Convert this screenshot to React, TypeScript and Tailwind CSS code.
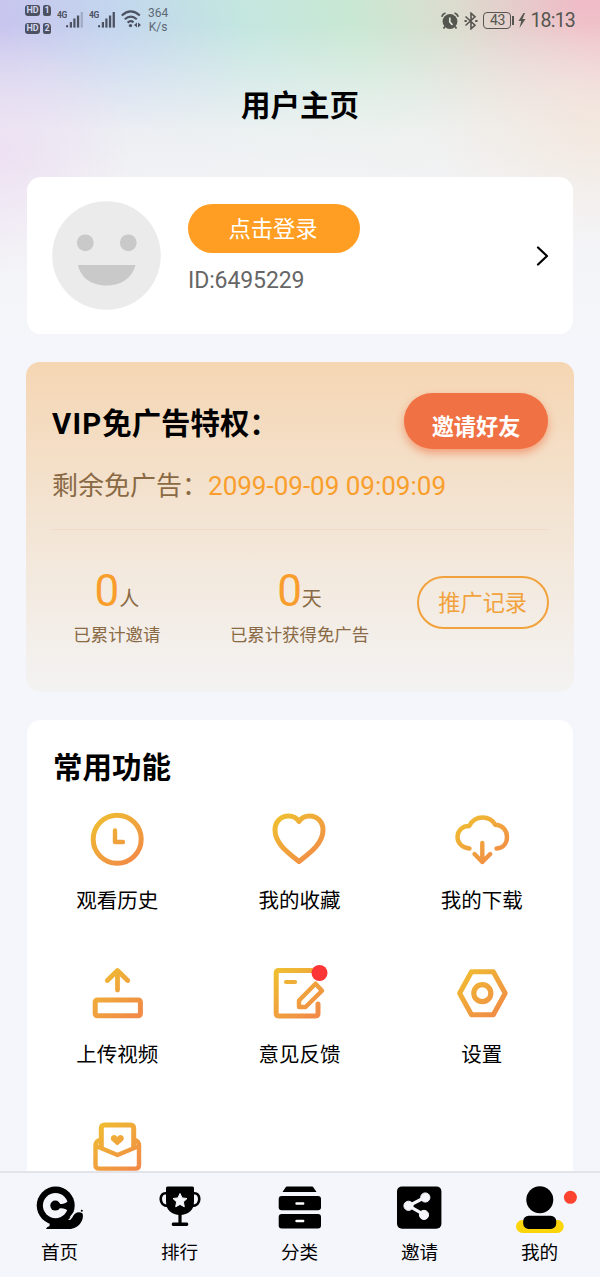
import { Fragment } from "react";
import type { ReactNode } from "react";

const HEART = "M27 9.5C24.5 5.5 20.5 4 16.5 4C8.5 4 3 10 3 18C3 31 15 40 27 49.5C39 40 51 31 51 18C51 10 45.5 4 37.5 4C33.5 4 29.5 5.5 27 9.5Z"

const features: { id: string; label?: string; icon: ReactNode; dot?: boolean }[] = [
  {
    id: "history",
    label: "观看历史",
    icon: (
      <>
        <circle cx="27.2" cy="27.2" r="24" strokeWidth="5" />
        <path d="M25 18.5V30H33" strokeWidth="4.4" />
      </>
    ),
  },
  { id: "favorite", label: "我的收藏", icon: <path d={HEART} /> },
  {
    id: "download",
    label: "我的下载",
    icon: (
      <>
        <path d="M14.5 36.5C7 36 2.5 31 2.5 25C2.5 18 8 13.8 14.2 14C17 8.5 21.5 5.5 27.5 5.5C33.5 5.5 38 8.5 40.2 12.8C47.5 13 52 18.5 52 25C52 31.5 48 36 41.5 36.5" strokeWidth="4.4" />
        <path d="M27.3 31V50M19.5 42L27.3 50L35.2 42" strokeWidth="4.4" />
      </>
    ),
  },
  {
    id: "upload",
    label: "上传视频",
    icon: (
      <>
        <rect x="5.2" y="34" width="45.2" height="15.8" rx="2" strokeWidth="5" />
        <path d="M27.5 24V5M17.3 14.5L27.5 4.5L37.7 14.5" strokeWidth="4.8" />
      </>
    ),
  },
  {
    id: "feedback",
    label: "意见反馈",
    dot: true,
    icon: (
      <>
        <path d="M40 4.5H7Q4.2 4.5 4.2 7.3V47.2Q4.2 50 7 50H43.2Q46 50 46 47.2V38" />
        <path d="M14 16H23" strokeWidth="4.2" />
        <path d="M27 34.5L43.5 17.7L50 24.7L33.5 41H27Z" strokeWidth="4.4" />
      </>
    ),
  },
  {
    id: "settings",
    label: "设置",
    icon: (
      <>
        <path d="M16.5 5.7H38.3L50.2 27.2L38.3 48.7H16.5L4.6 27.2Z" strokeWidth="5" />
        <circle cx="27.3" cy="27.2" r="8.5" strokeWidth="5.2" />
      </>
    ),
  },
  {
    id: "mail",
    icon: (
      <>
        <path d="M11.3 27V8.5Q11.3 5 14.8 5H40.2Q43.7 5 43.7 8.5V27" />
        <path d="M11 20Q5.5 20.5 5.5 26V45Q5.5 48.6 9 48.6H45.6Q49 48.6 49 45V26Q49 20.5 44 20" strokeWidth="4.4" />
        <path d="M6 26L27.5 35L49 26" strokeWidth="4.4" />
        <path d="M27.3 25.5L21.5 20.5Q19.8 17.5 22.3 15.5Q25.3 13.8 27.3 17Q29.3 13.8 32.3 15.5Q34.8 17.5 33.1 20.5Z" fill="url(#warm)" stroke="none" />
      </>
    ),
  },
]

const tabs: { id: string; label: string; icon: ReactNode }[] = [
  {
    id: "home",
    label: "首页",
    icon: (
      <>
        <path d="M10 43Q10.5 41 13.5 40L14 34H34C37 32 37 28 41 26.5Q44 25.5 46.5 27.5C48.5 33 43.5 43 33 43Z" />
        <circle cx="19.7" cy="19.6" r="19" />
        <circle cx="19.5" cy="19.6" r="12.6" className="fill-[#f5f6fb]" />
        <circle cx="19.3" cy="19.6" r="5" />
        <path d="M22 17.5Q28 19.5 33.5 14V26Q29 21 22 22.5Z" />
        <path d="M34 31.5L38 26.5" className="stroke-[#f5f6fb]" strokeWidth="1.2" />
        <circle cx="45.8" cy="24.8" r="1" />
      </>
    ),
  },
  {
    id: "rank",
    label: "排行",
    icon: (
      <>
        <path d="M11.5 .5H36.5Q38 .5 38 2V16C38 24 32 29 24 29C16 29 10 24 10 16V2Q10 .5 11.5 .5Z" />
        <path d="M11 7.5C6.5 6.5 4.7 9.5 4.7 13C4.7 17 7.5 20 12 20M37 7.5C41.5 6.5 43.3 9.5 43.3 13C43.3 17 40.5 20 36 20" fill="none" stroke="black" strokeWidth="2.6" />
        <path d="M22.4 28H25.6V36.5H31Q32.3 36.5 32.3 38.2Q32.3 40 31 40H17Q15.7 40 15.7 38.2Q15.7 36.5 17 36.5H22.4Z" />
        <path d="M24 7.5L26.1 11.9L31 12.5L27.4 15.9L28.3 20.8L24 18.4L19.7 20.8L20.6 15.9L17 12.5L21.9 11.9Z" className="fill-[#f5f6fb] stroke-[#f5f6fb]" strokeLinejoin="round" />
      </>
    ),
  },
  {
    id: "category",
    label: "分类",
    icon: (
      <>
        <path d="M11 .5H36Q37 .5 37.5 1.5L40.5 6H6.5L9.5 1.5Q10 .5 11 .5Z" />
        <rect x="2.7" y="10" width="42.3" height="14.3" rx="3" />
        <rect x="2.7" y="28" width="42.3" height="14.5" rx="3" />
        <path d="M20.5 17.5H27.2M20.5 35H27.2" className="stroke-white" strokeWidth="2.4" strokeLinecap="round" />
      </>
    ),
  },
  {
    id: "invite",
    label: "邀请",
    icon: (
      <>
        <rect x="1" y=".4" width="44.4" height="42.3" rx="5" />
        <g className="fill-[#f5f6fb] stroke-[#f5f6fb]">
          <path d="M28.7 11.5L12.7 19.8L28 28.7" fill="none" strokeWidth="3.2" />
          <circle cx="29.3" cy="11.5" r="4.6" />
          <circle cx="12.5" cy="19.8" r="4.6" />
          <circle cx="28" cy="28.9" r="4.6" />
        </g>
      </>
    ),
  },
  {
    id: "mine",
    label: "我的",
    icon: (
      <>
        <rect x="0" y="34" width="47.8" height="13" rx="6.5" fill="#fcd40a" />
        <rect x="7.2" y="29.7" width="33" height="13.2" rx="5.5" />
        <circle cx="23.8" cy="13.8" r="13.5" />
        <circle cx="54.4" cy="11.3" r="6.5" fill="#fc4330" />
      </>
    ),
  },
]

function Signal({ weak }: { weak?: boolean }) {
  return (
    <div className="flex w-[27px] items-start">
      <span className="-mt-px w-[9px] origin-left scale-x-90 text-[9.5px] font-bold leading-[10px] tracking-tighter">4G</span>
      <svg width="18" height="18" viewBox="0 0 18 18" className="mt-px shrink-0 fill-current">
        <rect x="0" y="13" width="2.2" height="2.6" rx="1" />
        <rect x="3.8" y="10" width="2.2" height="5.6" />
        <rect x="7.3" y="6.5" width="2.2" height="9.1" />
        <rect x="10.9" y="3.5" width="2.3" height="12.1" />
        <rect x="14.6" y="-.5" width="2.3" height="16.1" opacity={weak ? 0.3 : 1} />
      </svg>
    </div>
  )
}

function StatusBar() {
  return (
    <div className="flex h-10 shrink-0 items-start justify-between px-[25px] text-[#4c5262]">
      <div className="flex">
        <div className="flex w-8 flex-col gap-[7px] pt-[5px]">
          {[1, 2].map((n) => (
            <div key={n} className="flex gap-[3px] text-[9px] font-bold leading-[11px] text-[#d3d6f1]">
              <span className="h-[11px] w-[15px] rounded-[3px] bg-[#4c5262] text-center">HD</span>
              <span className="h-[11px] w-2 rounded-[2px] rounded-tr-[4px] bg-[#4c5262] text-center">{n}</span>
            </div>
          ))}
        </div>
        <div className="flex gap-[5px] pt-[11px]">
          <Signal weak />
          <Signal />
        </div>
        <svg width="21" height="18" viewBox="0 0 21 18" className="ml-[5px] mt-[10px] fill-none stroke-current" strokeWidth="2.2">
          <path d="M.8 5.5Q9.8-2.6 18.8 5.5M3.8 9.3Q9.8 3.8 15.8 9.3M6.6 12.6Q9.8 10 12.5 12.3" />
          <circle cx="9.5" cy="15.6" r="1.7" className="fill-current stroke-none" />
          <path d="M16 12.5L13 15L16 17.5ZM17 12.5L20 15L17 17.5Z" className="fill-current stroke-none" />
        </svg>
        <div className="ml-[6px] pt-[6px] text-center text-[12px] leading-[14px] text-[#5f6875]">
          <p>364</p>
          <p>K/s</p>
        </div>
      </div>

      <div className="flex items-center pt-[9px] text-[#555650]">
        <svg width="18" height="18" viewBox="0 0 18 18">
          <circle cx="9" cy="9.5" r="7.4" className="fill-current" />
          <path d="M.8 4.8Q1.5 2 4.5 1M17.2 4.8Q16.5 2 13.5 1M4 14.5L2.5 16.5M14 14.5L15.5 16.5" className="fill-none stroke-current" strokeWidth="1.8" />
          <path d="M8.8 5.5V10L11.5 12.8" fill="none" stroke="#dbe5d8" strokeWidth="1.7" />
        </svg>
        <svg width="14" height="18" viewBox="0 0 14 18" className="ml-[5px] fill-none stroke-current" strokeWidth="1.6">
          <path d="M1.5 4.5L11 13.2L7 16.8V1.2L11 4.8L1.5 13.5" />
          <path d="M.5 9H2.8M11.2 9H13.5" strokeWidth="2" />
        </svg>
        <span className="ml-[5px] h-[17px] w-[28px] rounded-[4px] border-[1.5px] border-current text-center text-[14px] leading-[15px] tracking-[-0.5px]">43</span>
        <span className="ml-px h-[9px] w-[2px] bg-current" />
        <svg width="8" height="15" viewBox="0 0 8 15" className="ml-[4px] fill-current">
          <path d="M5.5 0L.5 8H3.2L1.5 15L7.5 6H4.5L7 0Z" />
        </svg>
        <span className="ml-[4px] pt-px text-[19.5px] leading-[22px] tracking-[-0.8px]">18:13</span>
      </div>
    </div>
  )
}

function Stat({ unit, label }: { unit: string; label: string }) {
  return (
    <div className="-ml-px flex flex-col items-center">
      <p className="flex items-baseline text-[#8a6a45]">
        <span className="text-[44px] leading-[50px] text-[#f99e2c]">0</span>
        <span className="text-[20px]">{unit}</span>
      </p>
      <p className="mt-[7px] whitespace-nowrap text-[17.4px] leading-6 text-[#8a6a45]">{label}</p>
    </div>
  )
}

export default function App() {
  return (
    <Fragment>
      <svg width="0" height="0" className="absolute">
        <defs>
          <linearGradient id="warm" gradientUnits="userSpaceOnUse" x1="8" y1="4" x2="44" y2="50">
            <stop offset="0" stopColor="#efbd31" />
            <stop offset="1" stopColor="#f18b47" />
          </linearGradient>
        </defs>
      </svg>

      <div className="flex h-[1277px] w-[600px] flex-col overflow-hidden bg-[#f5f6fb] font-['Roboto','Noto_Sans_CJK_SC',sans-serif] text-black">
        <main className="flex h-[1171px] flex-col overflow-hidden bg-[radial-gradient(130px_120px_at_0px_155px,#ecdcf2c0_0%,#ecdcf200_100%),radial-gradient(170px_120px_at_600px_125px,#f3e7dac0_0%,#f3e7da00_100%),linear-gradient(180deg,#f3f3f500_25px,#f3f3f580_85px,#f3f3f4d8_130px,#f3f3f5_190px,#f5f6fb_350px),linear-gradient(75deg,#c8c5ee_0px,#c8c5ee_300px,#c3d6ee_410px,#c3e6e0_530px,#c9e8d3_640px,#dcdccf_740px,#efbcc7_860px)]">
          <StatusBar />

          <h1 className="mt-[46px] text-center text-[29.5px] font-bold leading-10">用户主页</h1>

          <section className="mx-[27px] mt-[51px] flex h-[157px] shrink-0 items-center rounded-[14px] bg-white pl-[25px] pr-[23px]">
            <svg width="109" height="109" viewBox="0 0 109 109">
              <circle cx="54.5" cy="54.5" r="54.3" fill="#ebebeb" />
              <circle cx="33.3" cy="41.8" r="8.4" fill="#c9c9c9" />
              <circle cx="76.3" cy="41.8" r="8.4" fill="#c9c9c9" />
              <path d="M26 64H83.5C80 78 68 84.5 54.7 84.5C41 84.5 29 78 26 64Z" fill="#c9c9c9" />
            </svg>
            <div className="ml-[27px] flex flex-1 flex-col items-start pb-[12px]">
              <button className="h-[49px] w-[172px] rounded-full bg-[#ff9e22] pr-[2px] pt-px text-[22.3px] leading-[49px] text-white">点击登录</button>
              <p className="mt-[13px] text-[23px] leading-[30px] tracking-[-0.1px] text-[#666]">ID:6495229</p>
            </div>
            <svg width="14" height="20" viewBox="0 0 14 20" className="fill-none stroke-black" strokeWidth="2.2" strokeLinecap="round" strokeLinejoin="round">
              <path d="M2 1.5L11 10L2 18.5" />
            </svg>
          </section>

          <section className="mx-[26px] mt-7 h-[330px] shrink-0 rounded-[14px] bg-linear-to-b from-[#f5d6b3] via-[#f3e5d5] to-[#f3f3f3]">
            <div className="flex items-center justify-between px-[26px] pt-[31px]">
              <h2 className="pt-[5px] text-[29.4px] font-bold leading-10">
                <span className="tracking-[1.2px]">VIP</span>免广告特权：
              </h2>
              <button className="h-[56px] w-[144px] rounded-full bg-[#f07244] pt-[13px] text-[22.2px] font-bold leading-[43px] text-white shadow-[0_4px_8px_#f0724499]">邀请好友</button>
            </div>
            <p className="mt-[19px] whitespace-nowrap pl-[26px] text-[26px] leading-9 text-[#8a6a45]">
              剩余免广告：<span className="text-[#f99e2c]">2099-09-09 09:09:09</span>
            </p>
            <div className="mx-[26px] mt-[25px] h-px bg-[#f0dac6]" />
            <div className="grid grid-cols-3 pt-[36px]">
              <Stat unit="人" label="已累计邀请" />
              <Stat unit="天" label="已累计获得免广告" />
              <button className="mt-[10px] h-[53px] w-[132px] justify-self-center rounded-full border-2 border-[#f2a23c] pt-px text-[22.2px] leading-[49px] text-[#f2a23c]">推广记录</button>
            </div>
          </section>

          <section className="mx-[27px] mt-7 h-[600px] shrink-0 rounded-[14px] bg-white pt-[28px]">
            <h2 className="pl-[26px] text-[29.5px] font-bold leading-10">常用功能</h2>
            <div className="-ml-px mt-[24px] grid grid-cols-3 gap-y-[58px]">
              {features.map((item) => (
                <div key={item.id} className="flex h-24 flex-col items-center">
                  <svg width="54" height="54" viewBox="0 0 54 54" className="shrink-0 overflow-visible" fill="none" stroke="url(#warm)" strokeWidth="5" strokeLinecap="round" strokeLinejoin="round">
                    {item.icon}
                    {item.dot && <circle cx="47.5" cy="7" r="8" fill="#fc3636" stroke="none" />}
                  </svg>
                  {item.label && <p className="mt-[20px] text-[20.5px] leading-[30px]">{item.label}</p>}
                </div>
              ))}
            </div>
          </section>
        </main>

        <nav className="grid h-[106px] shrink-0 grid-cols-5 border-t-2 border-[#e3e4e9] bg-[#f5f6fb]">
          {tabs.map((tab) => (
            <div key={tab.id} className="flex flex-col items-center pt-[13px]">
              <svg width="48" height="44" viewBox="0 0 48 44" className="shrink-0 overflow-visible">
                {tab.icon}
              </svg>
              <p className="mt-[9px] pr-px text-[18.6px] leading-7">{tab.label}</p>
            </div>
          ))}
        </nav>
      </div>
    </Fragment>
  )
}
